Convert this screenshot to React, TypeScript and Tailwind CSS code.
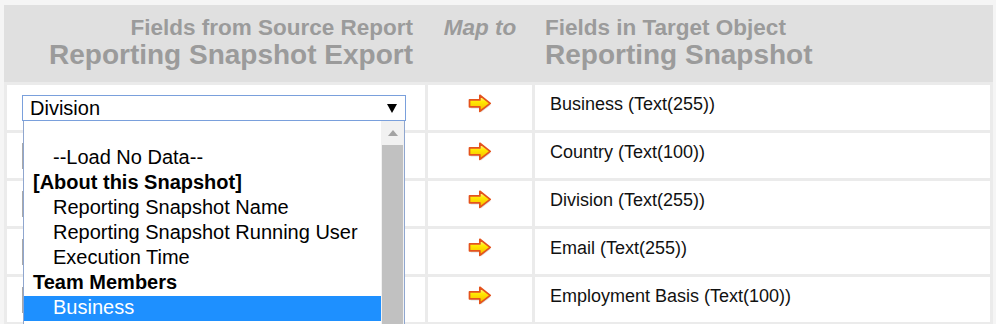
import React from "react";

const rows = [
  "Business (Text(255))",
  "Country (Text(100))",
  "Division (Text(255))",
  "Email (Text(255))",
  "Employment Basis (Text(100))",
];

const options: { label: string; kind: "blank" | "opt" | "group"; selected?: boolean }[] = [
  { label: "", kind: "blank" },
  { label: "--Load No Data--", kind: "opt" },
  { label: "[About this Snapshot]", kind: "group" },
  { label: "Reporting Snapshot Name", kind: "opt" },
  { label: "Reporting Snapshot Running User", kind: "opt" },
  { label: "Execution Time", kind: "opt" },
  { label: "Team Members", kind: "group" },
  { label: "Business", kind: "opt", selected: true },
];

const MapArrow = () => (
  <svg width="28" height="23" viewBox="0 0 24 20">
    <defs>
      <linearGradient id="ag" x1="0" y1="0" x2="0" y2="1">
        <stop offset="0" stopColor="#fffbc0" />
        <stop offset="0.4" stopColor="#ffea00" />
        <stop offset="1" stopColor="#f7b500" />
      </linearGradient>
    </defs>
    <path d="M3 7.5 H12 V4 L20.5 10.5 L12 17 V13.5 H3 Z" fill="#c8c8c8" opacity="0.6" />
    <path
      d="M2 6 H11 V2 L20 9 L11 16 V12 H2 Z"
      fill="url(#ag)"
      stroke="#e4531c"
      strokeWidth="1.5"
      strokeLinejoin="round"
    />
  </svg>
);

const Caret = () => (
  <svg width="10" height="9" viewBox="0 0 10 9">
    <polygon points="0,0 10,0 5,9" fill="#000" />
  </svg>
);

const Dropdown = () => (
  <div className="absolute left-[15px] top-[10px] z-10 w-[384px]">
    <div className="flex h-[26px] items-center justify-between border border-[#7aa0dc] bg-white pl-[7px] pr-[8px] text-[20px] text-black">
      <span>Division</span>
      <Caret />
    </div>
    <div className="mx-[1px] flex h-[230px] border border-t-0 border-[#8fa6cf] bg-white">
      <div className="flex-1">
        {options.map((o, i) => (
          <div
            key={i}
            className={
              "flex h-[25px] items-center pb-[3px] text-[20px] leading-none " +
              (o.kind === "group" ? "pl-[9px] font-bold text-black " : "pl-[29px] text-black ") +
              (o.selected ? "bg-[#1e90ff] text-white" : "")
            }
          >
            {o.label}
          </div>
        ))}
      </div>
      <div className="flex w-[23px] flex-col bg-[#f1f1f1]">
        <div className="flex h-[24px] items-center justify-center">
          <svg width="10" height="6" viewBox="0 0 10 6">
            <polygon points="0,6 10,6 5,0" fill="#a3a3a3" />
          </svg>
        </div>
        <div className="mx-[1px] flex-1 bg-[#c1c1c1]" />
      </div>
    </div>
  </div>
);

export default function App() {
  return (
    <div className="h-[324px] w-[996px] overflow-hidden bg-[#f5f5f5] pl-[4px] pt-[5px] font-['Liberation_Sans',Arial,sans-serif]">
      <div className="w-[989px] bg-[#ebebeb]">
        <div className="grid h-[77px] grid-cols-[424px_104px_461px] bg-[#e0e0e0] font-bold text-[#9b9b9b]">
          <div className="flex flex-col items-end pr-[15px] pt-[10px]">
            <div className="text-[22.5px] leading-[25px]">Fields from Source Report</div>
            <div className="text-[28px] leading-[30px]">Reporting Snapshot Export</div>
          </div>
          <div className="pt-[10px] text-center text-[22.5px] italic leading-[25px]">Map to</div>
          <div className="pl-[13px] pt-[10px]">
            <div className="text-[22.5px] leading-[25px]">Fields in Target Object</div>
            <div className="text-[28px] leading-[30px]">Reporting Snapshot</div>
          </div>
        </div>
        <div className="grid grid-cols-[418px_104px_455px] gap-[3px] p-[3px]">
          {rows.map((r, i) => (
            <React.Fragment key={r}>
              <div className="relative h-[45px] bg-white">
                <div className="absolute left-[15px] top-[10px] h-[26px] w-[383px] border border-[#a9a9a9] bg-white" />
                {i === 0 && <Dropdown />}
              </div>
              <div className="flex h-[45px] justify-center bg-white pl-[2px] pt-[8px]">
                <MapArrow />
              </div>
              <div className="h-[45px] bg-white pl-[15px] pt-[8px] text-[18px] leading-[22px] text-[#111]">
                {r}
              </div>
            </React.Fragment>
          ))}
        </div>
      </div>
    </div>
  );
}
